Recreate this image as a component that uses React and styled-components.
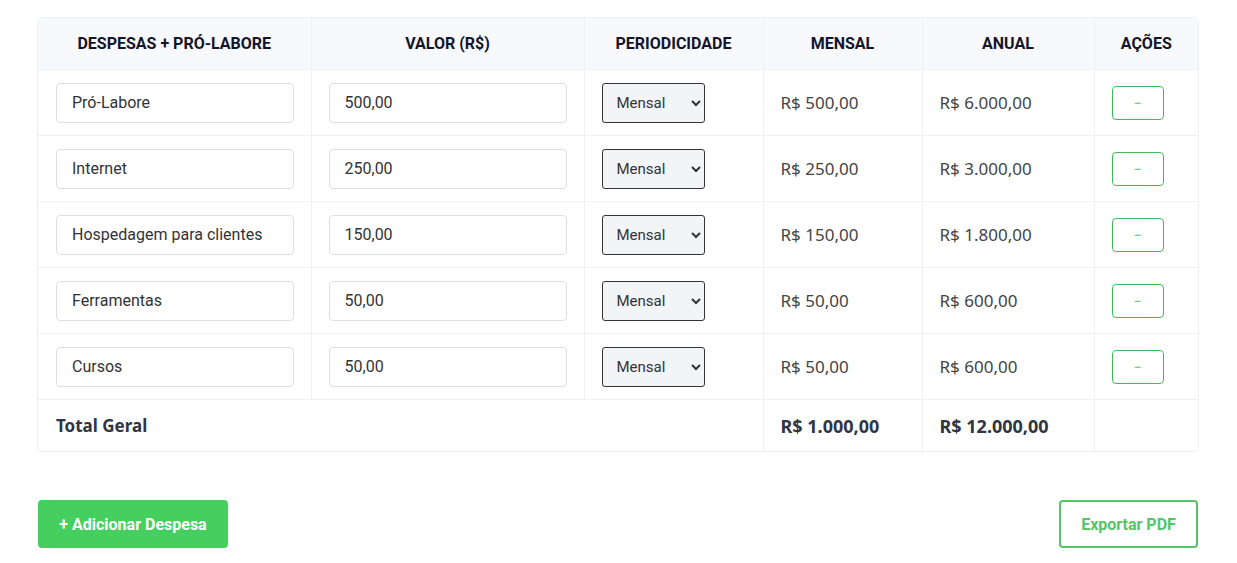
import React from 'react';
import styled, { createGlobalStyle } from 'styled-components';

const GlobalStyle = createGlobalStyle`
  body {
    margin: 0;
    background: #ffffff;
    font-family: Roboto, "Liberation Sans", sans-serif;
  }
`;

const Page = styled.div`
  padding: 18px 39px 0 38px;
`;

const Card = styled.div`
  border-radius: 4px;
  box-shadow: 0 0 0 1px #f0f0f3, 0 1px 3px rgba(0, 0, 0, 0.04);
  overflow: hidden;
`;

const Table = styled.table`
  width: 100%;
  border-collapse: collapse;
  table-layout: fixed;
`;

const Th = styled.th`
  background: #f8f9fc;
  color: #14142b;
  font-family: Roboto, sans-serif;
  font-weight: 700;
  font-size: 16px;
  text-transform: uppercase;
  height: 51px;
  padding: 0 8px;
  text-align: center;
  border-right: 1px solid #eef0f3;
  &:last-child {
    border-right: none;
  }
`;

const Td = styled.td`
  height: 65px;
  padding: 0 17px;
  border-top: 1px solid #f0f0f2;
  border-right: 1px solid #f0f0f2;
  font-family: "Noto Sans", "Open Sans", sans-serif;
  font-size: 17px;
  color: #444;
  vertical-align: middle;
  &:first-child {
    padding-left: 18px;
  }
  &:last-child {
    border-right: none;
  }
`;

const TotalTd = styled(Td)`
  height: 51px;
  font-weight: 700;
  font-size: ${p => (p.label ? '17px' : '18px')};
  color: #2f3542;
`;

const TextInput = styled.input`
  box-sizing: border-box;
  width: 100%;
  height: 40px;
  padding: 0 15px;
  border: 1px solid #dcdfe3;
  border-radius: 4px;
  font-family: Roboto, sans-serif;
  font-size: 16px;
  color: #333;
  background: #fff;
  outline: none;
`;

const Select = styled.select`
  box-sizing: border-box;
  width: 103px;
  height: 40px;
  padding: 0 6px 0 10px;
  border: 1px solid #333;
  border-radius: 3px;
  background: #f3f4f6;
  font-family: Roboto, sans-serif;
  font-size: 15px;
  color: #333;
`;

const RemoveButton = styled.button`
  display: block;
  width: 52px;
  height: 34px;
  border: 1px solid #45b95a;
  border-radius: 4px;
  background: #fff;
  color: #45b95a;
  font-size: 12px;
  line-height: 1;
  cursor: pointer;
`;

const Actions = styled.div`
  display: flex;
  justify-content: space-between;
  margin-top: 49px;
`;

const AddButton = styled.button`
  height: 48px;
  width: 190px;
  border: none;
  border-radius: 4px;
  background: #45cf5e;
  color: #fff;
  font-family: Roboto, sans-serif;
  font-weight: 700;
  font-size: 16px;
  cursor: pointer;
`;

const ExportButton = styled.button`
  height: 48px;
  width: 139px;
  border: 2px solid #53c668;
  border-radius: 4px;
  background: #fff;
  color: #53c668;
  font-family: Roboto, sans-serif;
  font-weight: 700;
  font-size: 16px;
  cursor: pointer;
`;

const rows = [
  { name: 'Pró-Labore', value: '500,00', mensal: 'R$ 500,00', anual: 'R$ 6.000,00' },
  { name: 'Internet', value: '250,00', mensal: 'R$ 250,00', anual: 'R$ 3.000,00' },
  { name: 'Hospedagem para clientes', value: '150,00', mensal: 'R$ 150,00', anual: 'R$ 1.800,00' },
  { name: 'Ferramentas', value: '50,00', mensal: 'R$ 50,00', anual: 'R$ 600,00' },
  { name: 'Cursos', value: '50,00', mensal: 'R$ 50,00', anual: 'R$ 600,00' },
];

const App = () => {
  return (
    <Page>
      <GlobalStyle />
      <Card>
        <Table>
          <colgroup>
            <col style={{ width: 273 }} />
            <col style={{ width: 273 }} />
            <col style={{ width: 179 }} />
            <col style={{ width: 159 }} />
            <col style={{ width: 172 }} />
            <col style={{ width: 104 }} />
          </colgroup>
          <thead>
            <tr>
              <Th>Despesas + Pró-Labore</Th>
              <Th>Valor (R$)</Th>
              <Th>Periodicidade</Th>
              <Th>Mensal</Th>
              <Th>Anual</Th>
              <Th>Ações</Th>
            </tr>
          </thead>
          <tbody>
            {rows.map(r => (
              <tr key={r.name}>
                <Td><TextInput defaultValue={r.name} /></Td>
                <Td><TextInput defaultValue={r.value} /></Td>
                <Td>
                  <Select defaultValue="mensal">
                    <option value="mensal">Mensal</option>
                    <option value="anual">Anual</option>
                  </Select>
                </Td>
                <Td>{r.mensal}</Td>
                <Td>{r.anual}</Td>
                <Td><RemoveButton>−</RemoveButton></Td>
              </tr>
            ))}
            <tr>
              <TotalTd label colSpan={3}>Total Geral</TotalTd>
              <TotalTd>R$ 1.000,00</TotalTd>
              <TotalTd>R$ 12.000,00</TotalTd>
              <TotalTd />
            </tr>
          </tbody>
        </Table>
      </Card>
      <Actions>
        <AddButton>+ Adicionar Despesa</AddButton>
        <ExportButton>Exportar PDF</ExportButton>
      </Actions>
    </Page>
  );
};

export default App;
